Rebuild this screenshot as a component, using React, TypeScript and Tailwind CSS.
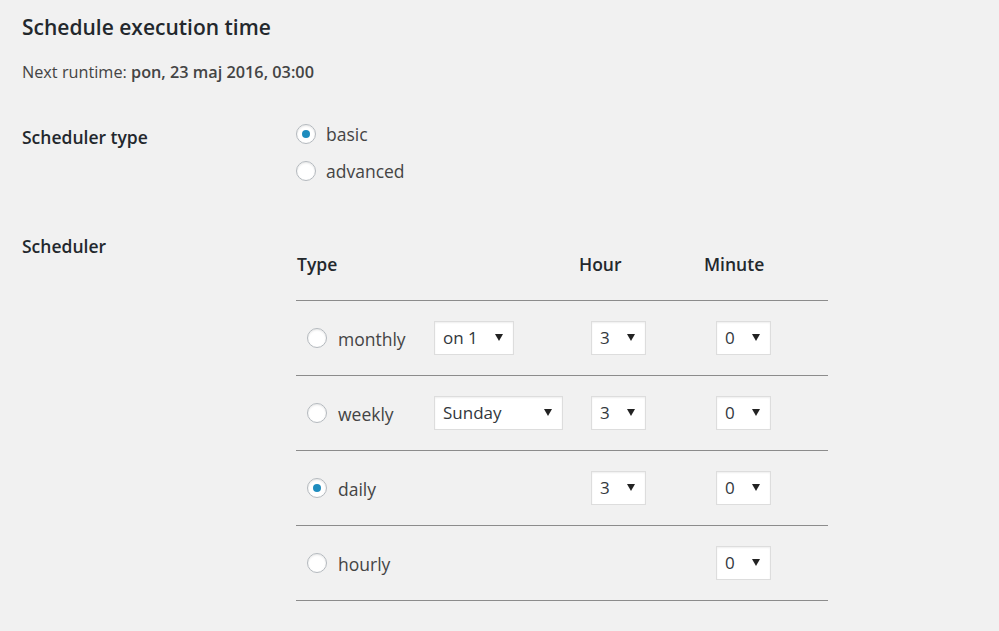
import React from 'react';

const font = { fontFamily: '"Open Sans", "Noto Sans", sans-serif' };

function Radio({ checked }: { checked?: boolean }) {
  return (
    <span className="flex h-[20px] w-[20px] shrink-0 items-center justify-center rounded-full border border-[#b4b9be] bg-white shadow-[inset_0_1px_2px_rgba(0,0,0,0.1)]">
      {checked && <span className="h-[8px] w-[8px] rounded-full bg-[#1e8cbe]" />}
    </span>
  );
}

function Select({ value, width }: { value: string; width: string }) {
  return (
    <div
      className={`flex h-[34px] items-center justify-between border border-[#ddd] bg-white pl-[8px] pr-[10px] text-[17px] text-[#32373c] shadow-[inset_0_1px_2px_rgba(0,0,0,0.07)] ${width}`}
    >
      <span>{value}</span>
      <svg width="8" height="7" viewBox="0 0 8 7" className="mb-[2px]">
        <path d="M0 0h8L4 7z" fill="#222" />
      </svg>
    </div>
  );
}

type Row = {
  label: string;
  checked?: boolean;
  type?: { value: string; width: string };
  hour?: string;
  minute: string;
};

const rows: Row[] = [
  { label: 'monthly', type: { value: 'on 1', width: 'w-[80px]' }, hour: '3', minute: '0' },
  { label: 'weekly', type: { value: 'Sunday', width: 'w-[129px]' }, hour: '3', minute: '0' },
  { label: 'daily', checked: true, hour: '3', minute: '0' },
  { label: 'hourly', minute: '0' },
];

export default function App() {
  return (
    <div className="min-h-screen bg-[#f1f1f1] pl-[22px] text-[#444]" style={font}>
      <h2 className="pt-[13px] text-[21px] font-semibold leading-[28px] text-[#23282d]">
        Schedule execution time
      </h2>
      <p className="mt-[21px] text-[16.25px] leading-[20px]">
        Next runtime: <strong className="font-semibold">pon, 23 maj 2016, 03:00</strong>
      </p>

      <div className="mt-[40px] flex">
        <div className="w-[274px] pt-[3px] text-[17.5px] font-semibold leading-[24px] text-[#23282d]">
          Scheduler type
        </div>
        <div className="flex flex-col gap-[13px]">
          {['basic', 'advanced'].map((t, i) => (
            <label key={t} className="flex h-[24px] items-center gap-[10px] text-[17.5px]">
              <Radio checked={i === 0} />
              {t}
            </label>
          ))}
        </div>
      </div>

      <div className="mt-[51px] flex">
        <div className="w-[274px] text-[17.5px] font-semibold leading-[24px] text-[#23282d]">Scheduler</div>
        <div className="mt-[6px] w-[532px]">
          <div className="grid h-[60px] grid-cols-[138px_145px_125px_124px] pt-[12px] text-[17.5px] font-semibold leading-[24px] text-[#23282d]">
            <span className="pl-px">Type</span>
            <span />
            <span>Hour</span>
            <span>Minute</span>
          </div>
          <div className="border-b border-[#8c8c8c]">
            {rows.map((r) => (
              <div
                key={r.label}
                className="grid h-[75px] grid-cols-[138px_145px_125px_124px] items-center border-t border-[#8c8c8c]"
              >
                <label className="flex items-center gap-[11px] pl-[11px] text-[17.5px]">
                  <Radio checked={r.checked} />
                  <span className="pt-[3px]">{r.label}</span>
                </label>
                <div>{r.type && <Select value={r.type.value} width={r.type.width} />}</div>
                <div className="pl-[12px]">{r.hour && <Select value={r.hour} width="w-[55px]" />}</div>
                <div className="pl-[12px]">
                  <Select value={r.minute} width="w-[55px]" />
                </div>
              </div>
            ))}
          </div>
        </div>
      </div>
    </div>
  );
}
